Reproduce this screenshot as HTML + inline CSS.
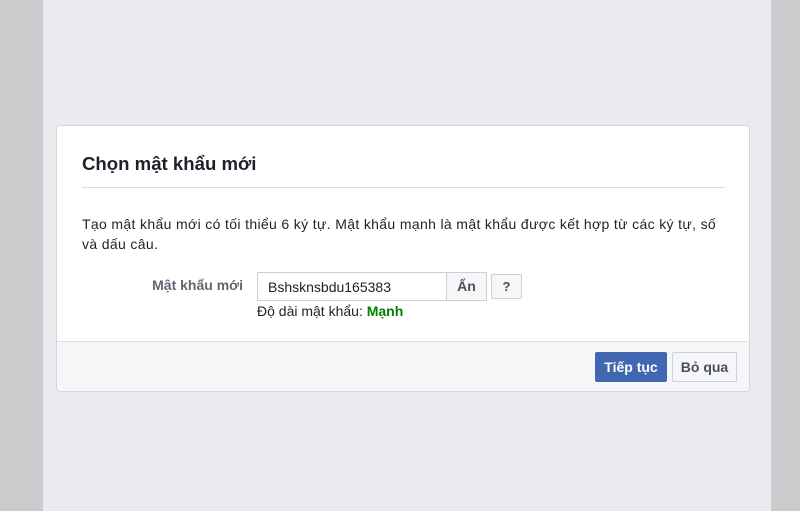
<!DOCTYPE html>
<html><head><meta charset="utf-8"><style>
*{box-sizing:border-box;margin:0;padding:0}
body{width:800px;height:511px;overflow:hidden;background:#cacbcd;font-family:"Liberation Sans",Arial,sans-serif;position:relative}
.main{position:absolute;left:43px;top:0;width:728px;height:511px;background:#e9ebee}
.card{position:absolute;left:56px;top:125px;width:694px;height:267px;background:#fff;border:1px solid #d3d6db;border-radius:4px;overflow:hidden}
.title{position:absolute;left:25px;top:27px;font-size:18.6px;font-weight:bold;color:#1d2129}
.hr{position:absolute;left:25px;top:61px;width:643px;height:1px;background:#dadde1}
.p{position:absolute;left:25px;top:88px;width:660px;font-size:14px;line-height:20px;color:#1d2129;letter-spacing:0.35px}
.lab{position:absolute;right:506px;top:151px;font-size:14px;font-weight:bold;color:#606770}
.inp{position:absolute;left:200px;top:146px;width:190px;height:29px;border:1px solid #ccd0d5;font-size:14px;color:#1d2129;padding:6px 10px}
.an{position:absolute;left:389px;top:146px;width:41px;height:29px;border:1px solid #ccd0d5;background:#f5f6f7;font-size:14px;font-weight:bold;color:#4b4f56;text-align:center;line-height:27px}
.q{position:absolute;left:434px;top:148px;width:31px;height:25px;border:1px solid #ccd0d5;border-radius:2px;background:#f5f6f7;font-size:13px;font-weight:bold;color:#4b4f56;text-align:center;line-height:23px}
.str{position:absolute;left:200px;top:177px;font-size:14px;color:#1d2129}
.str b{color:#008000}
.foot{position:absolute;left:0;top:215px;width:100%;height:52px;background:#f5f6f7;border-top:1px solid #dadde1}
.b1{position:absolute;left:538px;top:10px;width:72px;height:30px;background:#4267b2;border:1px solid #4267b2;border-radius:2px;color:#fff;font-size:14px;font-weight:bold;text-align:center;line-height:28px}
.b2{position:absolute;left:615px;top:10px;width:65px;height:30px;background:#f5f6f7;border:1px solid #ccd0d5;border-radius:2px;color:#4b4f56;font-size:14px;font-weight:bold;text-align:center;line-height:28px}
</style></head><body>
<div class="main"></div>
<div class="card">
<div class="title">Chọn mật khẩu mới</div>
<div class="hr"></div>
<div class="p">Tạo mật khẩu mới có tối thiểu 6 ký tự. Mật khẩu mạnh là mật khẩu được kết hợp từ các ký tự, số<br>và dấu câu.</div>
<div class="lab">Mật khẩu mới</div>
<div class="inp">Bshsknsbdu165383</div>
<div class="an">Ẩn</div>
<div class="q">?</div>
<div class="str">Độ dài mật khẩu: <b>Mạnh</b></div>
<div class="foot"><div class="b1">Tiếp tục</div><div class="b2">Bỏ qua</div></div>
</div>
</body></html>
